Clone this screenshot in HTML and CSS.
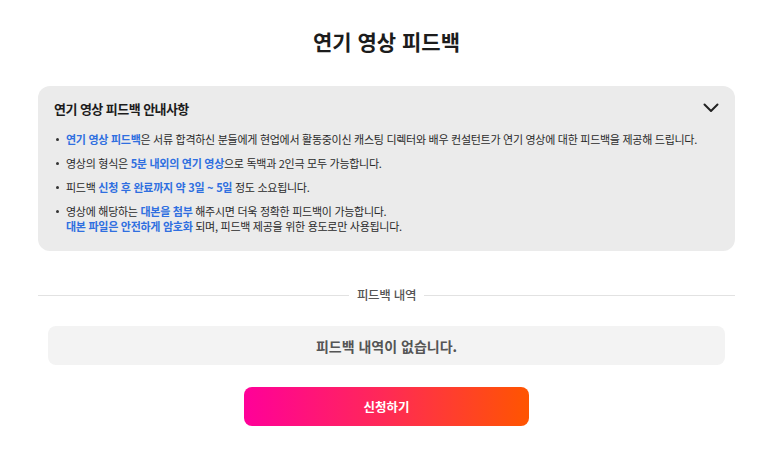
FILE: index.html
```html
<!DOCTYPE html>
<html lang="ko">
<head>
<meta charset="utf-8">
<link rel="stylesheet" href="styles.css">
</head>
<body>
<main class="page">
  <h1 class="title">연기 영상 피드백</h1>
  <section class="notice">
    <div class="notice-head">
      <h2 class="notice-title">연기 영상 피드백 안내사항</h2>
      <svg class="chevron" width="16" height="10" viewBox="0 0 16 10"><path d="M1.5 1.5 L8 8 L14.5 1.5" fill="none" stroke="#222" stroke-width="2" stroke-linecap="round" stroke-linejoin="round"/></svg>
    </div>
    <ul class="notice-list">
      <li><span class="hl">연기 영상 피드백</span>은 서류 합격하신 분들에게 현업에서 활동중이신 캐스팅 디렉터와 배우 컨설턴트가 연기 영상에 대한 피드백을 제공해 드립니다.</li>
      <li>영상의 형식은 <span class="hl">5분 내외의 연기 영상</span>으로 독백과 2인극 모두 가능합니다.</li>
      <li>피드백 <span class="hl">신청 후 완료까지 약 3일 ~ 5일</span> 정도 소요됩니다.</li>
      <li>영상에 해당하는 <span class="hl">대본을 첨부</span> 해주시면 더욱 정확한 피드백이 가능합니다.<br><span class="hl">대본 파일은 안전하게 암호화</span> 되며, 피드백 제공을 위한 용도로만 사용됩니다.</li>
    </ul>
  </section>
  <div class="divider"><span class="divider-label">피드백 내역</span></div>
  <div class="empty">피드백 내역이 없습니다.</div>
  <button class="apply">신청하기</button>
</main>
</body>
</html>
```
FILE: styles.css
```css
* { box-sizing: border-box; }
html, body { margin: 0; padding: 0; background: #fff; }
body {
  font-family: "Noto Sans CJK KR", "Noto Sans", sans-serif;
  color: #222;
}
.page {
  width: 697px;
  margin: 0 auto;
  display: flex;
  flex-direction: column;
  align-items: stretch;
}
.title {
  margin: 25px 0 0;
  height: 32px;
  line-height: 32px;
  font-size: 21px;
  font-weight: 700;
  text-align: center;
  letter-spacing: 0;
  color: #1c1c1c;
}
.notice {
  margin-top: 29px;
  background: #ebebeb;
  border-radius: 12px;
  padding: 12px 16px 17px 16px;
}
.notice-head {
  display: flex;
  justify-content: space-between;
  align-items: center;
  height: 20px;
}
.notice-title {
  margin: 0;
  font-size: 13px;
  font-weight: 700;
  letter-spacing: -0.55px;
  color: #1c1c1c;
}
.notice-list {
  list-style: none;
  margin: 14px 0 0;
  padding: 0;
}
.notice-list li {
  position: relative;
  padding-left: 12px;
  font-size: 11px;
  line-height: 15px;
  letter-spacing: -0.28px;
  color: #2a2a2a;
  margin-bottom: 9px;
}
.notice-list li:last-child { margin-bottom: 0; }
.notice-list li::before {
  content: "";
  position: absolute;
  left: 2px;
  top: 6px;
  width: 3px;
  height: 3px;
  border-radius: 50%;
  background: #333;
}
.hl { color: #2f6fe0; font-weight: 700; }
.divider {
  margin-top: 36px;
  display: flex;
  align-items: center;
  gap: 8px;
}
.divider::before, .divider::after {
  content: "";
  flex: 1;
  height: 1px;
  background: #e2e2e2;
}
.divider-label {
  font-size: 12.5px;
  line-height: 16px;
  letter-spacing: -0.3px;
  color: #555;
  font-weight: 500;
}
.empty {
  margin: 23px 10px 0;
  height: 39px;
  background: #f3f3f3;
  border-radius: 8px;
  display: flex;
  align-items: center;
  justify-content: center;
  font-size: 14px;
  font-weight: 700;
  letter-spacing: 0;
  color: #555;
}
.apply {
  align-self: center;
  margin-top: 22px;
  width: 285px;
  height: 39px;
  border: none;
  border-radius: 8px;
  background: linear-gradient(90deg, #ff0099 0%, #ff2a55 50%, #ff5500 100%);
  color: #fff;
  font-family: inherit;
  font-size: 12.5px;
  font-weight: 700;
  letter-spacing: 0;
}
```
